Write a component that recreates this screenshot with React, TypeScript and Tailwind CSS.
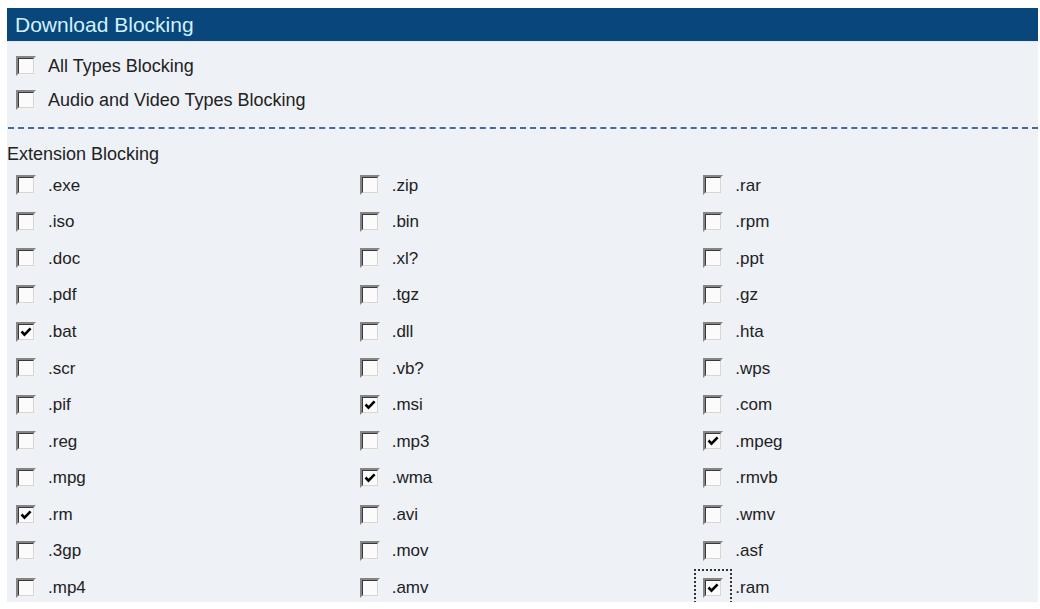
import React from 'react';

type Ext = { name: string; checked?: boolean; focused?: boolean };

const extensions: Ext[] = [
  { name: '.exe' }, { name: '.zip' }, { name: '.rar' },
  { name: '.iso' }, { name: '.bin' }, { name: '.rpm' },
  { name: '.doc' }, { name: '.xl?' }, { name: '.ppt' },
  { name: '.pdf' }, { name: '.tgz' }, { name: '.gz' },
  { name: '.bat', checked: true }, { name: '.dll' }, { name: '.hta' },
  { name: '.scr' }, { name: '.vb?' }, { name: '.wps' },
  { name: '.pif' }, { name: '.msi', checked: true }, { name: '.com' },
  { name: '.reg' }, { name: '.mp3' }, { name: '.mpeg', checked: true },
  { name: '.mpg' }, { name: '.wma', checked: true }, { name: '.rmvb' },
  { name: '.rm', checked: true }, { name: '.avi' }, { name: '.wmv' },
  { name: '.3gp' }, { name: '.mov' }, { name: '.asf' },
  { name: '.mp4' }, { name: '.amv' }, { name: '.ram', checked: true, focused: true },
];

function Box({ checked, focused }: { checked?: boolean; focused?: boolean }) {
  return (
    <span
      className={
        'flex h-[20px] w-[20px] shrink-0 border-2 border-t-[#858585] border-l-[#858585] border-b-[#f2f2f2] border-r-[#f2f2f2] ' +
        (focused ? 'outline-2 outline-dotted outline-[#333] outline-offset-[7px]' : '')
      }
    >
      <span className="flex flex-1 items-center justify-center border border-t-[#3a3a3a] border-l-[#3a3a3a] border-b-[#d6d6d6] border-r-[#d6d6d6] bg-[#fbfbfb]">
        {checked && (
          <svg viewBox="0 0 14 14" className="h-[14px] w-[14px]">
            <path d="M2.5 6.5 L5.5 9.6 L11.6 3.4" fill="none" stroke="#000" strokeWidth="2.6" />
          </svg>
        )}
      </span>
    </span>
  );
}

function Option({ label, checked, focused, h }: { label: string; checked?: boolean; focused?: boolean; h: string }) {
  return (
    <label className={'flex items-center gap-[12px] pl-[9px] ' + h}>
      <Box checked={checked} focused={focused} />
      <span>{label}</span>
    </label>
  );
}

export default function App() {
  return (
    <div className="min-h-screen bg-white pt-[8px] pl-[7px] pr-[2px] text-[#222]" style={{ fontFamily: '"Liberation Sans", Arial, sans-serif' }}>
      <div className="h-[594px] overflow-hidden bg-[#eef1f6]">
        <div className="flex h-[34px] items-center border-b border-[#dfe9f3] bg-[#08467b] pl-[8px] text-[21px] text-[#d2f1ff]">
          Download Blocking
        </div>

        <div className="pt-[7px] text-[18px]">
          <Option label="All Types Blocking" h="h-[34px]" />
          <Option label="Audio and Video Types Blocking" h="h-[34px]" />
        </div>

        <div className="mt-[10px] ml-[1px] border-t-2 border-dashed border-[#3f6e9c]" />

        <div className="flex h-[38px] items-center pt-[12px] text-[18px]">Extension Blocking</div>

        <div className="grid grid-cols-3 auto-rows-[36.6px] text-[17px]">
          {extensions.map((e) => (
            <Option key={e.name} label={e.name} checked={e.checked} focused={e.focused} h="h-[36.6px]" />
          ))}
        </div>
      </div>
    </div>
  );
}
